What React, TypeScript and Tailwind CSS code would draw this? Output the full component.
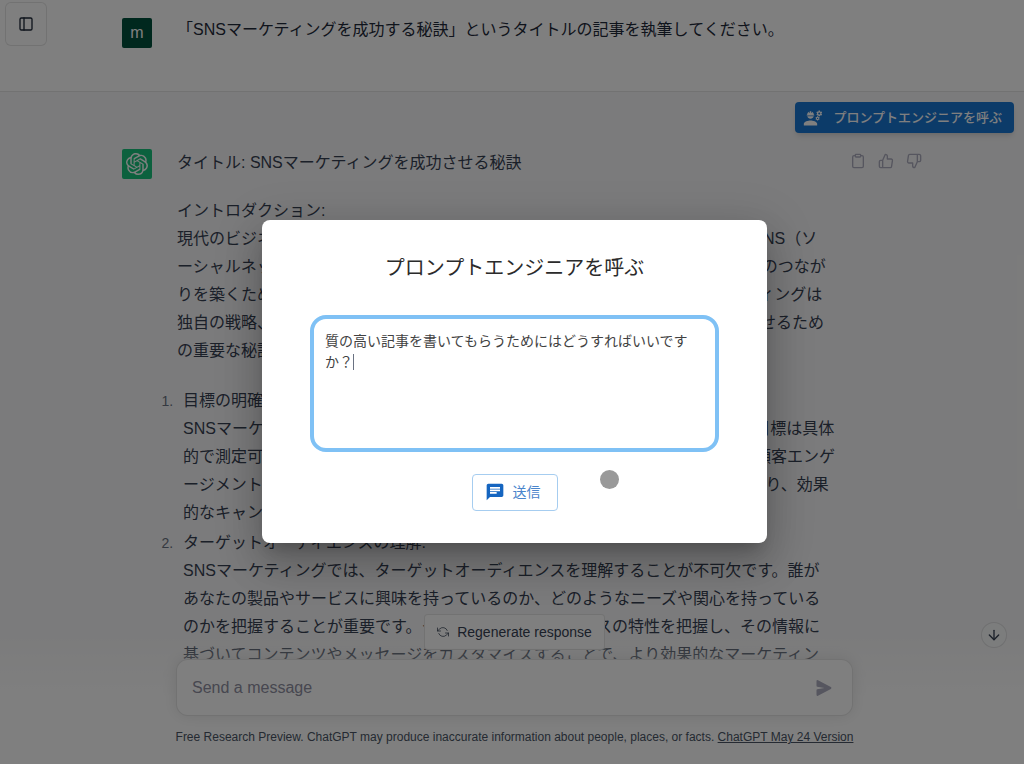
import { FiArrowDown, FiClipboard, FiRefreshCcw, FiSidebar, FiThumbsDown, FiThumbsUp } from 'react-icons/fi'
import { MdChat, MdEngineering } from 'react-icons/md'
import { SiOpenai } from 'react-icons/si'

const intro = [
  'イントロダクション:',
  '現代のビジネスにおいて、ソーシャルメディアは不可欠な存在になっています。 SNS（ソ',
  'ーシャルネットワーキングサービス）は、 SNS を通じて企業が多くの顧客や人とのつなが',
  'りを築くための重要な手段として、現在も広く活用されています。 SNS マーケティングは',
  '独自の戦略、計画が必要です。こちらの記事では、 SNS マーケティングを成功させるため',
  'の重要な秘訣をご紹介します。',
]

const sections = [
  [
    '目標の明確化:',
    'SNSマーケティングを成功させるためには、 明確な目標の設定が重要です。  各目標は具体',
    '的で測定可能なものとし、売上高の増加や、ROIの改善、ブランド認知の向上、顧客エンゲ',
    'ージメント向上などが挙げられます。 明確な目標を設定することで 方向性が定まり、効果',
    '的なキャンペーンを展開できます。',
  ],
  [
    'ターゲットオーディエンスの理解:',
    'SNSマーケティングでは、ターゲットオーディエンスを理解することが不可欠です。誰が',
    'あなたの製品やサービスに興味を持っているのか、どのようなニーズや関心を持っている',
    'のかを把握することが重要です。ターゲットオーディエンスの特性を把握し、その情報に',
    '基づいてコンテンツやメッセージをカスタマイズすることで、より効果的なマーケティン',
  ],
]

const Lines = ({ lines }: { lines: string[] }) => (
  <>
    {lines.map((line) => (
      <span key={line} className="block whitespace-pre">{line}</span>
    ))}
  </>
)

const UserMessage = () => {
  return (
    <div className="border-b border-black/10 bg-white pl-5 pt-4 pb-[43px]">
      <div className="mx-auto flex max-w-[800px] items-start">
        <div className="mt-0.5 mr-[25px] flex h-[30px] w-[30px] shrink-0 items-center justify-center rounded-xs bg-[#00503c] text-white">m</div>
        <p className="text-base leading-7 text-gray-800">「SNSマーケティングを成功する秘訣」というタイトルの記事を執筆してください。</p>
      </div>
    </div>
  )
}

const AssistantMessage = () => {
  return (
    <div className="bg-[#f7f7f8] pt-2.5">
      <div className="flex justify-end pr-2.5">
        <button className="flex h-[31px] items-center rounded bg-[#1976d2] pl-2 pr-3 text-[13px] font-medium text-white shadow-md">
          <MdEngineering className="mr-2.5 h-5 w-5" />
          プロンプトエンジニアを呼ぶ
        </button>
      </div>
      <div className="mt-4 pl-5">
        <div className="mx-auto flex max-w-[800px] items-start">
          <div className="mr-[25px] flex h-[30px] w-[30px] shrink-0 items-center justify-center rounded-xs bg-[#19c37d] text-white">
            <SiOpenai className="h-[22px] w-[22px]" />
          </div>
          <div className="min-w-0 flex-1 text-base leading-7 text-gray-700">
            <p>タイトル: SNSマーケティングを成功させる秘訣</p>
            <p className="mt-5"><Lines lines={intro} /></p>
            <ol className="mt-[22px] flex list-decimal flex-col gap-0.5 marker:text-sm marker:text-gray-500">
              {sections.map((lines) => (
                <li key={lines[0]} className="pl-1.5"><Lines lines={lines} /></li>
              ))}
            </ol>
          </div>
          <div className="mt-1 flex shrink-0 gap-3 text-[#acacbe]">
            <button aria-label="Copy"><FiClipboard className="h-4 w-4" /></button>
            <button aria-label="Good response"><FiThumbsUp className="h-4 w-4" /></button>
            <button aria-label="Bad response"><FiThumbsDown className="h-4 w-4" /></button>
          </div>
        </div>
      </div>
    </div>
  )
}

const Composer = () => {
  return (
    <div className="absolute inset-x-0 bottom-0 flex flex-col items-center bg-[linear-gradient(180deg,rgba(255,255,255,0)_14%,#fff_55%)] pl-[5px]">
      <button className="flex h-9 items-center gap-2 rounded border border-black/10 bg-white px-3 text-sm font-medium text-gray-700">
        <FiRefreshCcw className="h-3 w-3" strokeWidth={1.5} />
        Regenerate response
      </button>
      <div className="mt-[9px] flex h-[57px] w-full max-w-[677px] items-center rounded-xl border border-black/10 bg-white pl-[15px] pr-5 shadow-[0_0_15px_rgba(0,0,0,0.1)]">
        <input type="text" aria-label="Send a message" placeholder="Send a message" className="min-w-0 flex-1 bg-transparent text-base text-gray-700 placeholder:text-[#8e8ea0] focus:outline-none" />
        <button aria-label="Send" className="text-[#acacbe]">
          <svg viewBox="0 0 16 16" className="h-4 w-4" fill="currentColor">
            <path d="M.5 1.163A1 1 0 0 1 1.97.28l12.868 6.837a1 1 0 0 1 0 1.766L1.969 15.72A1 1 0 0 1 .5 14.836V10.33a1 1 0 0 1 .816-.983L8.5 8 1.316 6.653A1 1 0 0 1 .5 5.67V1.163Z" />
          </svg>
        </button>
      </div>
      <p className="mt-[13px] pb-[19px] text-xs text-gray-600">
        Free Research Preview. ChatGPT may produce inaccurate information about people, places, or facts.{' '}
        <a href="#" className="underline">ChatGPT May 24 Version</a>
      </p>
    </div>
  )
}

const PromptDialog = () => {
  return (
    <div className="absolute inset-0 flex items-center justify-center bg-black/50 pl-[5px] pb-0.5">
      <div role="dialog" aria-labelledby="dialog-title" className="relative flex w-full max-w-[505px] flex-col items-center rounded-lg bg-white px-12 py-8 shadow-[0_11px_15px_-7px_rgba(0,0,0,0.2),0_24px_38px_3px_rgba(0,0,0,0.14),0_9px_46px_8px_rgba(0,0,0,0.12)]">
        <h2 id="dialog-title" className="text-xl leading-8 text-[#2b2b2b]">プロンプトエンジニアを呼ぶ</h2>
        <div className="relative mt-[31px] w-full">
          <textarea
            aria-labelledby="dialog-title"
            defaultValue="質の高い記事を書いてもらうためにはどうすればいいですか？"
            className="block h-[137px] w-full resize-none rounded-2xl border-4 border-[#7fc1f5] pt-3 pb-3 pl-[11px] pr-4 text-sm leading-[21px] text-[#424242] focus:outline-none"
          />
          <span className="absolute left-[43px] top-[39px] h-4 w-px bg-gray-500" />
        </div>
        <button className="mt-[22px] flex h-[37px] items-center gap-2 rounded border border-[#a6cdf0] px-3 text-sm text-[#4a85cc]">
          <MdChat className="h-5 w-5 text-[#1565c0]" />
          <span className="pr-1">送信</span>
        </button>
        <div className="absolute right-[148px] bottom-[54px] h-[19px] w-[19px] rounded-full bg-[#999999]" />
      </div>
    </div>
  )
}

const App = () => {
  return (
    <div className="relative h-screen overflow-hidden bg-[#f7f7f8] font-['Liberation_Sans','Noto_Sans_CJK_JP',sans-serif]">
      <UserMessage />
      <AssistantMessage />
      <button aria-label="Toggle sidebar" className="absolute left-[5px] top-0.5 flex h-11 w-[42px] items-center justify-center rounded-md border border-black/10 bg-white text-gray-800">
        <FiSidebar className="h-4 w-4" />
      </button>
      <Composer />
      <button aria-label="Scroll to bottom" className="absolute right-[17px] bottom-[116px] flex h-[26px] w-[26px] items-center justify-center rounded-full border border-black/10 bg-gray-50 text-gray-700">
        <FiArrowDown className="h-4 w-4" />
      </button>
      <PromptDialog />
    </div>
  )
}

export default App
